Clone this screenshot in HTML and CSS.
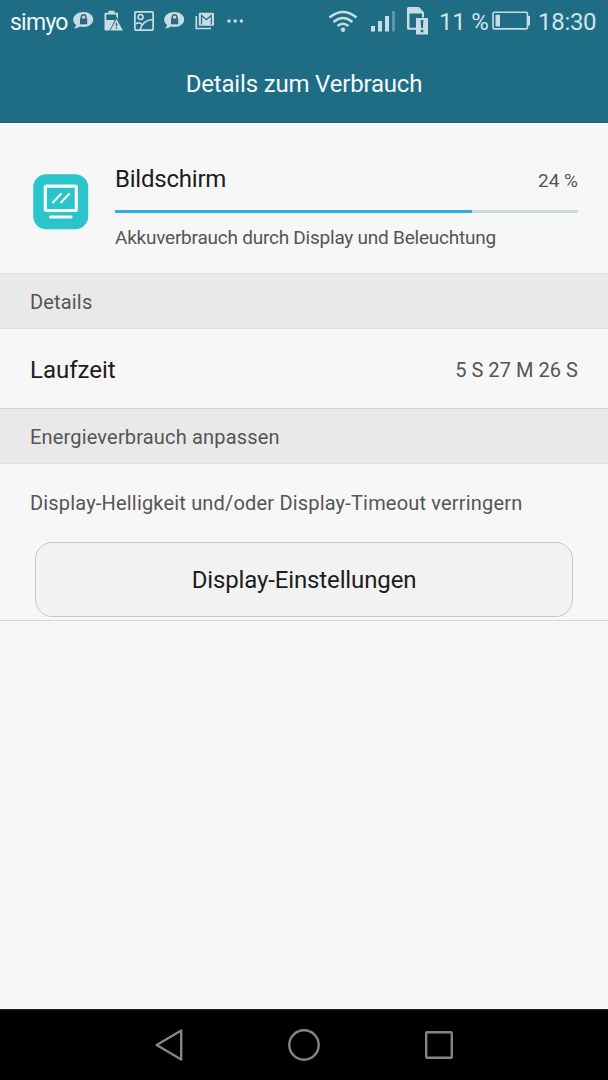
FILE: index.html
```html
<!DOCTYPE html>
<html lang="de">
<head>
<meta charset="utf-8">
<title>Details zum Verbrauch</title>
<link rel="stylesheet" href="styles.css">
</head>
<body>
<svg class="defs" width="0" height="0">
  <symbol id="chat-lock" viewBox="0 0 22 20">
    <path fill="#c7dde3" d="M11.500 1C17 1 21.200 4.300 21.200 8.500s-4.200 7.500-9.700 7.500c-1.300 0-2.500-.2-3.600-.5-1.600 1.200-3.700 2-6.400 2 1.400-1 2.300-2.200 2.500-3.600C2.100 12.500 1.200 10.600 1.200 8.500 1.200 4.300 6 1 11.500 1z"/>
    <path fill="#2d697c" d="M8 7.500h7.200v5.800H8z"/>
    <path fill="none" stroke="#2d697c" stroke-width="1.500" d="M9.300 8V6a2.300 2.300 0 0 1 4.600 0v2"/>
  </symbol>
</svg>
<header class="top">
  <div class="status">
    <div class="status-group">
      <span class="carrier">simyo</span>
      <svg class="i-chat" width="22" height="20"><use href="#chat-lock"/></svg>
      <svg class="i-power" width="20" height="22" viewBox="0 0 20 22" fill="#c7dde3">
        <path fill-rule="evenodd" d="M4.500.7h6v2h3.500V20.500H1.500q-1 0-1-1V3.700q0-1 1-1h3zM2.300 4.500v5.500h10V4.500z"/>
        <path fill="#206c84" d="M12.500 6.500 20 21.500H5z"/>
        <path d="M12.500 9 19 20.500H6.300z"/>
        <path d="M12.500 12.800v3.500m0 1v1.500" stroke="#206c84" stroke-width="1.500"/>
      </svg>
      <svg class="i-image" width="20" height="20" viewBox="0 0 20 20" fill="none" stroke="#c7dde3" stroke-width="1.700">
        <rect x=".9" y=".9" width="18.200" height="18.200" rx="1"/>
        <circle cx="6.500" cy="6" r="2.500"/>
        <path d="M1 13.500c2-2.300 5-2.300 7 0M6 19c1.500-6 5.500-10 13-10.500"/>
      </svg>
      <svg class="i-chat2" width="22" height="20"><use href="#chat-lock"/></svg>
      <svg class="i-mail" width="20" height="18" viewBox="0 0 20 18">
        <path fill="none" stroke="#c7dde3" stroke-width="1.700" d="M1.300 4v12.500H16"/>
        <rect x="3.800" y=".7" width="15.200" height="13" rx="1.200" fill="#c7dde3"/>
        <path fill="none" stroke="#206c84" stroke-width="1.200" d="M6.500 12.500V3.300l4.900 4.500 4.900-4.500v9.200"/>
      </svg>
      <svg class="i-more" width="17" height="4" viewBox="0 0 17 4" fill="#c7dde3"><circle cx="2" cy="2" r="1.700"/><circle cx="8.200" cy="2" r="1.700"/><circle cx="14.400" cy="2" r="1.700"/></svg>
    </div>
    <div class="status-group">
      <svg class="i-wifi" width="30" height="23" viewBox="0 0 30 23" fill="none" stroke="#c7dde3" stroke-width="2.600">
        <path d="M1.500 7.500q13.500-11 27 0M5.500 12q9.500-8 19 0M9.500 16q5.500-4.500 11 0"/>
        <circle cx="15" cy="19.700" r="2.200" fill="#c7dde3" stroke="none"/>
      </svg>
      <svg class="i-signal" width="25" height="22" viewBox="0 0 25 22" fill="#c7dde3">
        <path d="M0 16h4v5.500H0zM7 11h4v10.500H7zM14 6h4v15.500h-4z"/><path fill="#5d95a5" d="M21 1h3v20.500h-3z"/>
      </svg>
      <svg class="i-sim" width="22" height="28" viewBox="0 0 22 28">
        <path fill="#c7dde3" fill-rule="evenodd" d="M1.500 0h10.500l5 5.500v5H15V6.500H2.500v14.300H9v2H1.500Q0 22.800 0 21.300V1.500Q0 0 1.500 0z"/>
        <path fill="#c7dde3" d="M9 11h12v16.500H9z"/>
        <path fill="#206c84" d="M13.600 13h2.800l-.5 8h-1.800zM13.700 22.700h2.600v2.500h-2.600z"/>
      </svg>
      <span class="percent">11 %</span>
      <svg class="i-battery" width="38" height="20" viewBox="0 0 38 20">
        <rect x="1" y="1.300" width="34.500" height="16.600" rx="1.500" fill="none" stroke="#c7dde3" stroke-width="1.600"/>
        <path fill="#c7dde3" d="M3.500 3.800H8v11.700H3.500zM35.500 5H38v9.500h-2.500z"/>
      </svg>
      <span class="clock">18:30</span>
    </div>
  </div>
  <h1 class="title"><span>Details zum Verbrauch</span></h1>
</header>
<main class="content">
  <section class="usage">
    <svg class="app-icon" width="56" height="56" viewBox="0 0 56 56">
      <rect x=".2" y=".2" width="55" height="55" rx="13" fill="#2ac4cb"/>
      <g fill="none" stroke="#f7fbfb" stroke-width="3.200" stroke-linecap="round" stroke-linejoin="round">
        <rect x="12.300" y="12.200" width="31" height="24.300" rx="1"/>
        <path d="M17.500 43h20.500"/>
        <path stroke-width="2" d="m20 28.500 8-8.500m0 8.500 8-8.500"/>
      </g>
    </svg>
    <div class="usage-body">
      <div class="usage-head"><span class="label name">Bildschirm</span><span class="share">24 %</span></div>
      <div class="bar"><div class="bar-fill"></div></div>
      <p class="note">Akkuverbrauch durch Display und Beleuchtung</p>
    </div>
  </section>
  <h2 class="section">Details</h2>
  <div class="row"><span class="label runtime">Laufzeit</span><span class="value">5 S 27 M 26 S</span></div>
  <h2 class="section second">Energieverbrauch anpassen</h2>
  <section class="adjust">
    <p class="hint">Display-Helligkeit und/oder Display-Timeout verringern</p>
    <button class="button"><span>Display-Einstellungen</span></button>
  </section>
</main>
<nav class="nav">
  <svg width="28" height="32" viewBox="0 0 28 32"><path d="M26.200 1.500v29L1.700 16z"/></svg>
  <svg width="32" height="32" viewBox="0 0 32 32"><circle cx="16" cy="16" r="14.700"/></svg>
  <svg width="28" height="28" viewBox="0 0 28 28"><rect x="1.200" y="1.200" width="25.600" height="25.600" rx="1"/></svg>
</nav>
</body>
</html>
```
FILE: styles.css
```css
* { box-sizing: border-box; }
body { margin: 0; width: 608px; height: 1080px; display: flex; flex-direction: column; overflow: hidden; background: #f7f7f7; font-family: Roboto, "Noto Sans", sans-serif; color: #1c1c1c; }
h1, h2, p { margin: 0; font-weight: 400; }
span { white-space: nowrap; }
.defs { display: block; flex: none; position: absolute; }
.top { height: 123px; flex: none; background: #1f6c85; border-bottom: 1px solid #19647d; color: #f5fafc; }
.status { height: 44px; display: flex; justify-content: space-between; padding: 0 10px; font-size: 24px; line-height: 44px; color: #d0e3e8; }
.status-group { display: flex; align-items: center; }
.status-group svg { flex: none; margin-top: -2px; }
.carrier { width: 58px; font-size: 23px; letter-spacing: -0.75px; color: #edf7fa; padding-top: 1px; }
.status-group .i-chat { margin-left: 4px; }
.status-group .i-power { margin-left: 10px; }
.status-group .i-image { margin-left: 10px; }
.status-group .i-chat2 { margin-left: 9px; }
.status-group .i-mail { margin-left: 10px; }
.status-group .i-more { margin-left: 12px; }
.status-group .i-signal { margin-left: 13px; }
.status-group .i-sim { margin-left: 11px; }
.percent { width: 49px; margin-left: 10px; letter-spacing: -0.2px; }
.status-group .i-battery { margin-left: 4px; }
.clock { width: 60px; margin-left: 8px; letter-spacing: -0.3px; }
.title { height: 79px; line-height: 80px; text-align: center; font-size: 24px; letter-spacing: -0.18px; }
.content { flex: 1; }
.usage { height: 150px; display: flex; padding: 38px 30px 0 33px; }
.app-icon { flex: none; margin: 13px 26px 0 0; }
.usage-body { flex: 1; }
.usage-head { height: 49px; display: flex; justify-content: space-between; line-height: 37px; }
.label { font-size: 24px; }
.name { letter-spacing: -0.22px; }
.share { font-size: 19px; line-height: 40px; color: #555; }
.bar { height: 3px; background: #ccd7db; }
.bar-fill { width: 77%; height: 100%; background: #31ade1; }
.note { font-size: 19px; line-height: 22px; margin-top: 14px; letter-spacing: -0.23px; color: #555; white-space: nowrap; }
.section { height: 56px; padding: 0 30px; background: #e9e9e9; border-top: 1px solid #dedede; border-bottom: 1px solid #e0e0e0; color: #555; font-size: 20px; line-height: 57px; letter-spacing: 0.17px; }
.row { height: 79px; display: flex; justify-content: space-between; align-items: center; padding: 2px 30px 0; }
.value { font-size: 20px; letter-spacing: 0.05px; color: #555; }
.second { border-top-color: #d2d2d2; }
.adjust { height: 157px; padding: 27px 35px 0; border-bottom: 1px solid #d6d6d6; }
.hint { margin-left: -5px; font-size: 20px; line-height: 24px; letter-spacing: 0.18px; color: #555; white-space: nowrap; }
.button { display: block; width: 538px; height: 75px; margin-top: 27px; padding: 0; border: 1px solid #c9c9c9; border-radius: 17px; background: #f2f2f2; color: #1c1c1c; font: 24px Roboto, "Noto Sans", sans-serif; letter-spacing: -0.13px; }
.nav { flex: none; height: 71px; display: flex; justify-content: space-between; align-items: center; padding: 0 155px; background: #000; border-top: 1px solid #222; }
.nav svg { fill: none; stroke: #858585; stroke-width: 2.4; stroke-linejoin: round; }
```
